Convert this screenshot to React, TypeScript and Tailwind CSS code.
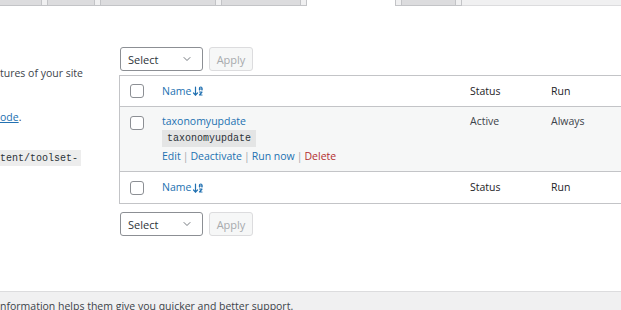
import React from 'react'
import { ArrowDownAZ, ChevronDown } from 'lucide-react'

const font = { fontFamily: '"Open Sans", "Noto Sans", sans-serif' }

type Tab = { w: string; active?: boolean }

const tabs: Tab[] = [
  { w: 'w-[41px]' },
  { w: 'w-[46px]' },
  { w: 'w-[114px]' },
  { w: 'w-[78px]' },
  { w: 'w-[88px]', active: true },
  { w: 'w-[53px]' },
]

const Gap = () => <div className="w-[7px] h-full bg-[#f0f0f1] border-x border-b border-[#c3c4c7]" />

const Checkbox = () => (
  <span className="block w-[14px] h-[14px] rounded-[3px] border border-[#8c8f94] bg-white" />
)

const BulkActions = () => (
  <div className="flex items-center gap-[6px] h-[24px] pl-[1px]">
    <div className="w-[83px] h-[24px] flex items-center justify-between pl-[7px] pr-[9px] border border-[#8c8f94] rounded-[3px] bg-white text-[11px] text-[#2c3338]">
      <span>Select</span>
      <ChevronDown size={12} strokeWidth={1.6} className="text-[#50575e]" />
    </div>
    <div className="w-[44px] h-[24px] flex items-center justify-center border border-[#dcdcde] rounded-[3px] bg-[#f6f7f7] text-[11px] text-[#a7aaad]">
      Apply
    </div>
  </div>
)

const HeadRow = ({ border }: { border: string }) => (
  <div className={`flex items-center h-[31px] bg-white ${border} border-[#c3c4c7]`}>
    <div className="w-[42px] pl-[10px]">
      <Checkbox />
    </div>
    <div className="w-[308px] flex items-center text-[#2271b1]">
      <span>Name</span>
      <ArrowDownAZ size={12} strokeWidth={2.4} className="ml-[1px]" />
    </div>
    <div className="w-[81px] text-[#1d2327]">Status</div>
    <div className="text-[#1d2327]">Run</div>
  </div>
)

export default function App() {
  return (
    <div
      className="w-[621px] h-[310px] overflow-hidden bg-white flex flex-col text-[10.5px] leading-[15px] text-[#3c434a]"
      style={font}
    >
      <div className="flex h-[6px] shrink-0">
        {tabs.map((t, i) => (
          <React.Fragment key={i}>
            {i > 0 && <Gap />}
            <div
              className={`${t.w} h-full ${t.active ? 'bg-white' : 'bg-[#dcdcde] border-b border-[#c3c4c7]'}`}
            />
          </React.Fragment>
        ))}
        <Gap />
        <div className="flex-1 h-full bg-[#f0f0f1] border-b border-[#dcdcde]" />
      </div>

      <div className="flex h-[285px] shrink-0">
        <div className="w-[119px] shrink-0 overflow-hidden whitespace-nowrap text-[#3c434a]">
          <p className="mt-[60px]">tures of your site</p>
          <p className="mt-[29px]">
            <span className="text-[#2271b1] underline">ode</span>.
          </p>
          <p className="mt-[25px]">
            <code
              className="inline-block bg-black/[0.07] text-[#2c3338] text-[10px] leading-[15px] pr-[3px] pt-[1px] pb-[0px]"
              style={{ fontFamily: '"Liberation Mono", monospace' }}
            >
              tent/toolset-
            </code>
          </p>
        </div>

        <div className="flex-1 pt-[41px]">
          <BulkActions />
          <div className="mt-[4px] w-[540px] border border-[#c3c4c7]">
            <HeadRow border="border-b" />
            <div className="flex items-start h-[65px] bg-[#f6f7f7] border-b border-[#c3c4c7] pt-[7px]">
              <div className="w-[42px] pl-[10px] pt-[2px]">
                <Checkbox />
              </div>
              <div className="w-[308px]">
                <div className="text-[#2271b1]">taxonomyupdate</div>
                <code
                  className="inline-block mt-[1px] bg-black/[0.07] text-[#2c3338] text-[10px] leading-[12px] px-[5px] pt-[3px] pb-[2px]"
                  style={{ fontFamily: '"Liberation Mono", monospace' }}
                >
                  taxonomyupdate
                </code>
                <div className="mt-[2px] flex gap-[2px]">
                  <span className="text-[#2271b1]">Edit</span>
                  <span className="text-[#a7aaad]">|</span>
                  <span className="text-[#2271b1]">Deactivate</span>
                  <span className="text-[#a7aaad]">|</span>
                  <span className="text-[#2271b1]">Run now</span>
                  <span className="text-[#a7aaad]">|</span>
                  <span className="text-[#b32d2e]">Delete</span>
                </div>
              </div>
              <div className="w-[81px] text-[#3c434a]">Active</div>
              <div className="text-[#3c434a]">Always</div>
            </div>
            <HeadRow border="" />
          </div>
          <div className="mt-[8px]">
            <BulkActions />
          </div>
        </div>
      </div>

      <div className="flex-1 bg-[#f0f0f1] border-t border-[#dcdcde] pt-[7px] whitespace-nowrap text-[#3c434a]">
        nformation helps them give you quicker and better support.
      </div>
    </div>
  )
}
